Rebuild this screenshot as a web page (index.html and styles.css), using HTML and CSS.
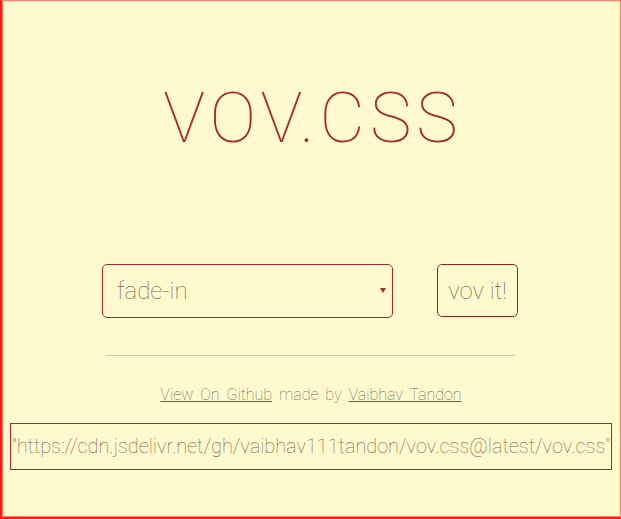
FILE: index.html
```html
<!DOCTYPE html>
<html lang="en">
<head>
<meta charset="utf-8">
<title>vov.css</title>
<link rel="stylesheet" href="styles.css">
</head>
<body>
<div class="page">
  <h1 class="title">VOV.CSS</h1>
  <div class="controls">
    <div class="picker">
      <select class="picker-select">
        <option>fade-in</option>
        <option>fade-out</option>
        <option>shake</option>
      </select>
      <span class="picker-caret"></span>
    </div>
    <button class="vov-btn" type="button">vov it!</button>
  </div>
  <hr class="divider">
  <p class="credits"><a href="#">View On Github</a> made by <a href="#">Vaibhav Tandon</a></p>
  <div class="cdn">"https://cdn.jsdelivr.net/gh/vaibhav111tandon/vov.css@latest/vov.css"</div>
</div>
</body>
</html>
```
FILE: styles.css
```css
html, body {
  margin: 0;
  padding: 0;
}

body {
  width: 621px;
  height: 519px;
  background: #fffacd;
  font-family: Roboto, "Liberation Sans", sans-serif;
  font-weight: 100;
}

.page {
  box-sizing: border-box;
  height: 519px;
  border-top: 1px solid #ff7f6a;
  border-right: 1px solid #ff7f6a;
  border-left: 2px solid #ff1a10;
  border-bottom: 2px solid #ff1a10;
  box-shadow: inset 1px -1px 0 #ff7f6a;
  display: flex;
  flex-direction: column;
  align-items: center;
  padding-top: 82px;
}

.title {
  margin: 0 0 0 4px;
  font-size: 70px;
  line-height: 70px;
  font-weight: 100;
  color: #a52a2a;
  letter-spacing: 5px;
}

.controls {
  display: flex;
  gap: 44px;
  margin-top: 111px;
  margin-left: -2px;
}

.picker {
  position: relative;
}

.picker-select {
  appearance: none;
  -webkit-appearance: none;
  box-sizing: border-box;
  width: 291px;
  height: 54px;
  padding: 0 14px;
  background: transparent;
  border: 1px solid #a52a2a;
  border-radius: 5px;
  font-family: inherit;
  font-weight: 100;
  font-size: 24px;
  color: #7a5a4c;
}

.picker-caret {
  position: absolute;
  right: 7px;
  top: 24px;
  width: 0;
  height: 0;
  border-left: 3px solid transparent;
  border-right: 3px solid transparent;
  border-top: 5px solid #a52a2a;
}

.vov-btn {
  box-sizing: border-box;
  width: 81px;
  height: 53px;
  padding: 0;
  background: transparent;
  border: 1px solid #8b2a1a;
  border-radius: 5px;
  font-family: inherit;
  font-weight: 100;
  font-size: 24px;
  color: #7a5a4c;
}

.divider {
  width: 410px;
  margin: 37px 0 0;
  border: 0;
  border-top: 1px solid #cfc7ad;
}

.credits {
  margin: 29px 0 0;
  font-size: 16px;
  color: #6f6f66;
  word-spacing: 3px;
}

.credits a {
  color: #5f6360;
}

.cdn {
  margin-top: 19px;
  border: 1px solid #a52a2a;
  padding: 8px 1px;
  font-size: 19.9px;
  line-height: 29px;
  color: #7a5a4c;
  white-space: nowrap;
}
```
